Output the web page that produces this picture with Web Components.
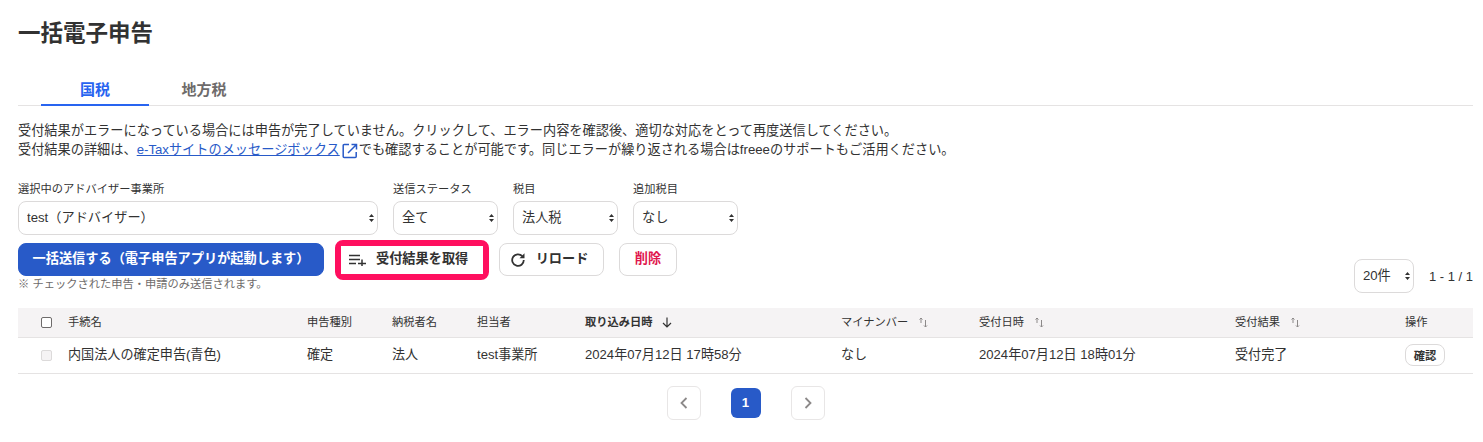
<!DOCTYPE html>
<html lang="ja">
<head>
<meta charset="utf-8">
<title>一括電子申告</title>
<style>
html,body{margin:0;padding:0;background:#fff}
body{font-family:"Liberation Sans","Noto Sans CJK JP",sans-serif;color:#323232;width:1483px;height:442px;overflow:hidden}
</style>
</head>
<body>
<x-page></x-page>
<script>
const FONT='"Liberation Sans","Noto Sans CJK JP",sans-serif';
function def(name,html){
  customElements.define(name,class extends HTMLElement{
    constructor(){super();this.attachShadow({mode:'open'}).innerHTML=html}
  });
}
def('x-tabs',`<style>
:host{display:flex;border-bottom:1px solid #e5e3e3;height:27px;font:bold 15px/1 ${FONT};color:#6e6b6b;padding-left:23px}
div{box-sizing:border-box;height:28px;padding-top:4px;text-align:center}
.a{width:108px;color:#2864f0;border-bottom:2px solid #2864f0}
.b{width:110px}
</style><div class="a">国税</div><div class="b">地方税</div>`);

def('x-notice',`<style>
:host{display:block;font:13.2px/19px ${FONT};color:#323232;white-space:nowrap;height:39px}
a{color:#285ac8;text-decoration:underline}
svg{display:inline-block;vertical-align:-3px;margin:-2px 1px -2px 2px}
</style>受付結果がエラーになっている場合には申告が完了していません。クリックして、エラー内容を確認後、適切な対応をとって再度送信してください。<br>受付結果の詳細は、<a href="#">e-Taxサイトのメッセージボックス</a><svg width="16" height="16" viewBox="0 0 16 16" fill="none" stroke="#285ac8" stroke-width="1.5"><path d="M7 1.500H2.200a1 1 0 0 0-1 1v11a1 1 0 0 0 1 1h11a1 1 0 0 0 1-1V9"/><path d="M6 10L14 2M9.500 1.500h5v5"/></svg>でも確認することが可能です。同じエラーが繰り返される場合はfreeeのサポートもご活用ください。`);

class XSelect extends HTMLElement{
  constructor(){super();this.attachShadow({mode:'open'})}
  connectedCallback(){
    this.shadowRoot.innerHTML=`<style>
:host{display:block;position:relative;font:12px ${FONT};width:var(--w)}
label{display:block;font-size:11.25px;line-height:14px;height:14px;margin-bottom:5px;color:#323232;white-space:nowrap}
:host([nolabel]) label{display:none}
select{appearance:none;-webkit-appearance:none;display:block;width:100%;height:34px;box-sizing:border-box;border:1px solid #dcdada;border-radius:8px;background:#fff;padding:0 0 2px 8px;font:13.2px ${FONT};color:#323232;margin:0}
svg{position:absolute;right:4px;bottom:13px}
</style><label>${this.getAttribute('label')||''}</label><select><option>${this.getAttribute('value')}</option></select><svg width="5" height="8" viewBox="0 0 5 8" fill="#323232"><path d="M2.500 0L5 3H0zM2.500 8L0 5h5z"/></svg>`;
  }
}
customElements.define('x-select',XSelect);

def('x-button',`<style>
:host{display:inline-flex;align-items:center;justify-content:center;box-sizing:border-box;height:33px;border:1px solid #dcdada;border-radius:8px;background:#fff;font:bold 13.2px/1 ${FONT};color:#323232;white-space:nowrap;gap:var(--gap,10px);padding:0 var(--pad,14px) 2px}
:host([primary]){background:#285ac8;border-color:#285ac8;color:#fff}
:host([danger]){color:#e0164e;padding:0 10px 1px}
</style><slot name="icon"></slot><slot></slot>`);

def('x-actions',`<style>
:host{display:flex;align-items:flex-start;justify-content:space-between}
.r{display:flex;gap:15px;align-items:center;margin-top:16px;font:13px ${FONT};white-space:nowrap}
.btns{display:flex;align-items:center}
.hl{border:6px solid #ff0f5f;border-radius:8px;height:40px;box-sizing:border-box;display:flex;align-items:center;margin:-3px 10px -4px 11px;width:154px}
.hl x-button{border:0;height:28px;width:100%;--gap:10px;--pad:8px;border-radius:0;justify-content:flex-start}
.note{font:11.25px/14px ${FONT};color:#6e6b6b;margin-top:1px}
x-select{--w:60px}
</style><div class="l"><div class="btns">
<x-button primary style="width:306px">一括送信する（電子申告アプリが起動します）</x-button>
<div class="hl"><x-button><svg slot="icon" width="17" height="12" viewBox="0 0 17 12" fill="none" stroke="#323232" stroke-width="1.5" style="margin-top:1px"><path d="M0 1.500h11M0 5.500h11M0 9.500h7M9 9.500h8M13 5.500v6.500"/></svg>受付結果を取得</x-button></div>
<x-button style="width:105px;margin-right:15px;--gap:11px;padding-right:4px;padding-left:0"><svg slot="icon" width="14" height="14" viewBox="0 0 14 14" fill="none" stroke="#323232" stroke-width="1.800" style="margin-top:3px"><path d="M11.300 3.200A5.800 5.800 0 1 0 12.800 7"/><path d="M13.500 .3v5H8.500z" fill="#323232" stroke="none"/></svg>リロード</x-button>
<x-button danger style="width:58px">削除</x-button>
</div><div class="note">※ チェックされた申告・申請のみ送信されます。</div></div>
<div class="r"><x-select nolabel value="20件"></x-select><span>1 - 1 / 1</span></div>`);

const sortI=`<svg width="10" height="11" viewBox="0 0 10 11" fill="none" stroke="#8c8989" stroke-width="1"><path d="M3 6V1M1.500 2.500L3 1l1.500 1.500M7.500 3v7M6 8.500L7.500 10 9 8.500"/></svg>`;
def('x-table',`<style>
:host{display:block;font:13.125px ${FONT};color:#323232}
table{border-collapse:collapse;table-layout:fixed;width:1455px}
th{box-sizing:border-box;background:#f5f3f4;height:29px;font-size:11.25px;font-weight:normal;text-align:left;padding:0 0 2px;border-bottom:1px solid #e5e3e3;white-space:nowrap}
th.b{font-weight:bold}
td{box-sizing:border-box;height:36px;padding:0 0 3px;border-bottom:1px solid #e5e3e3;white-space:nowrap}
.cb{display:block;box-sizing:border-box;width:11px;height:11px;margin-left:23px;border:1px solid #6e6b6b;border-radius:2px;background:#fff}
.cb.d{border-color:#dcdada;background:#f5f3f4}
th svg{margin-left:10px;vertical-align:-2px}
.ok{display:inline-flex;align-items:center;justify-content:center;box-sizing:border-box;width:40px;height:22px;border:1px solid #dcdada;border-radius:8px;background:#fff;font-size:11.25px;font-weight:bold;margin-top:3px}
</style><table>
<colgroup><col style="width:50px"><col style="width:239px"><col style="width:85px"><col style="width:85px"><col style="width:108px"><col style="width:256px"><col style="width:138px"><col style="width:256px"><col style="width:170px"><col style="width:68px"></colgroup>
<thead><tr><th><span class="cb" style="margin-top:2px"></span></th><th>手続名</th><th>申告種別</th><th>納税者名</th><th>担当者</th>
<th class="b">取り込み日時<svg width="10" height="11" viewBox="0 0 10 11" fill="none" stroke="#323232" stroke-width="1.200" style="margin-left:9px"><path d="M5 .5V10M1 6l4 4 4-4"/></svg></th>
<th>マイナンバー${sortI}</th><th>受付日時${sortI}</th><th>受付結果${sortI}</th><th>操作</th></tr></thead>
<tbody><tr><td><span class="cb d" style="margin-top:3px"></span></td><td>内国法人の確定申告(青色)</td><td>確定</td><td>法人</td><td>test事業所</td><td>2024年07月12日 17時58分</td><td>なし</td><td>2024年07月12日 18時01分</td><td>受付完了</td><td><span class="ok">確認</span></td></tr></tbody>
</table>`);

def('x-pager',`<style>
:host{display:flex;justify-content:center;align-items:center;gap:30px;font:bold 13.2px ${FONT}}
.n{box-sizing:border-box;width:34px;height:34px;border:1px solid #e8e6e6;border-radius:6px;display:flex;align-items:center;justify-content:center;background:#fff}
.c{width:30px;height:30px;background:#285ac8;border-radius:6px;color:#fff;display:flex;align-items:center;justify-content:center}
</style><div class="n"><svg width="8" height="12" viewBox="0 0 8 12" fill="none" stroke="#8c8989" stroke-width="1.800"><path d="M6.500 1L1.500 6l5 5"/></svg></div><div class="c">1</div><div class="n"><svg width="8" height="12" viewBox="0 0 8 12" fill="none" stroke="#8c8989" stroke-width="1.800"><path d="M1.500 1l5 5-5 5"/></svg></div>`);

def('x-page',`<style>
:host{display:block;box-sizing:border-box;width:1483px;padding:0 10px 0 18px}
h1{margin:0;padding-top:21px;font:bold 22.5px/26px ${FONT};color:#323232;height:45px}
x-tabs{margin-top:12px}
x-notice{margin-top:15px}
.f{display:flex;gap:15px;margin-top:22px}
x-actions{margin-top:8px}
x-table{margin-top:15px}
x-pager{margin-top:12px}
</style>
<h1>一括電子申告</h1>
<x-tabs></x-tabs>
<x-notice></x-notice>
<div class="f">
<x-select style="--w:360px" label="選択中のアドバイザー事業所" value="test（アドバイザー）"></x-select>
<x-select style="--w:105px" label="送信ステータス" value="全て"></x-select>
<x-select style="--w:105px" label="税目" value="法人税"></x-select>
<x-select style="--w:105px" label="追加税目" value="なし"></x-select>
</div>
<x-actions></x-actions>
<x-table></x-table>
<x-pager></x-pager>`);
</script>
</body>
</html>
